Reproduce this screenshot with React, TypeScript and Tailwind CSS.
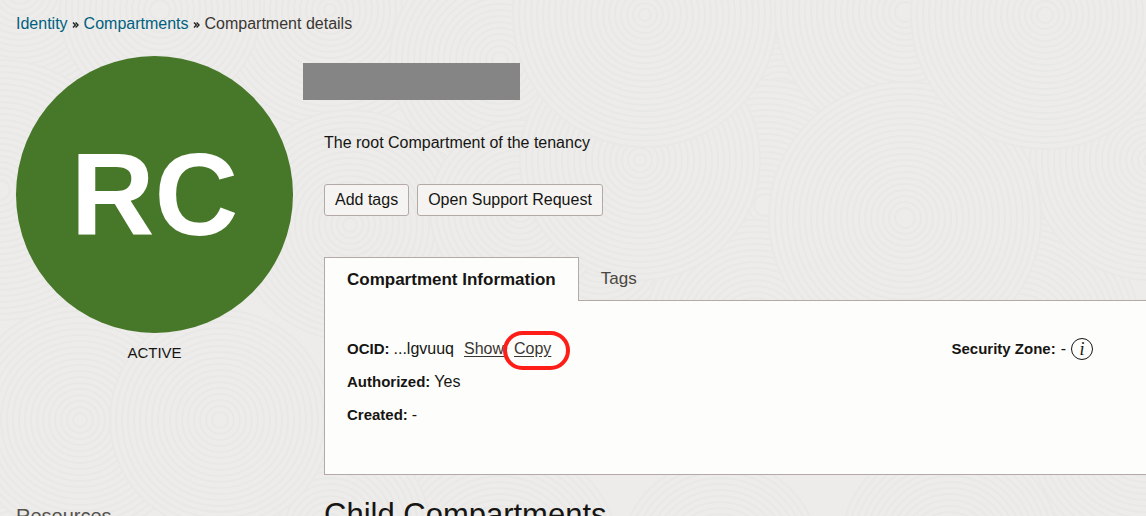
import { Fragment } from "react";

type Swirl = { x: number; y: number; r: number };

// Later swirls overlap the earlier ones.
const swirls: Swirl[] = [
  { x: 600, y: 250, r: 140 }, { x: 20, y: -10, r: 110 }, { x: 330, y: 10, r: 120 },
  { x: 500, y: 60, r: 110 }, { x: 780, y: 100, r: 130 }, { x: 0, y: 190, r: 130 },
  { x: 350, y: 225, r: 115 }, { x: 765, y: 205, r: 125 }, { x: 1146, y: 430, r: 130 },
  { x: 755, y: 330, r: 110 }, { x: 1020, y: 330, r: 120 }, { x: 500, y: 560, r: 120 },
  { x: 20, y: 560, r: 110 }, { x: 330, y: 530, r: 100 }, { x: 80, y: 420, r: 115 },
  { x: 220, y: 420, r: 110 }, { x: 160, y: 10, r: 100 }, { x: 520, y: 210, r: 90 },
  { x: 640, y: 160, r: 120 }, { x: 1150, y: 160, r: 120 }, { x: 645, y: 15, r: 132 },
  { x: 905, y: 12, r: 130 }, { x: 905, y: 218, r: 136 }, { x: 1045, y: 15, r: 134 },
  { x: 720, y: 560, r: 100 }, { x: 950, y: 550, r: 110 },
];

function Texture() {
  return (
    <svg aria-hidden="true" className="absolute inset-0 -z-10 h-full w-full">
      {swirls.map((s) => (
        <Fragment key={`${s.x}-${s.y}`}>
          <circle cx={s.x} cy={s.y} r={s.r} fill="#edecea" />
          {Array.from({ length: Math.floor(s.r / 6) }, (_, i) => (
            <circle key={i} cx={s.x} cy={s.y} r={s.r - i * 6} fill="none" stroke="#e8e8e6" strokeWidth="2" />
          ))}
        </Fragment>
      ))}
    </svg>
  );
}

function Separator() {
  return (
    <svg aria-hidden="true" viewBox="0 0 8 8" className="mx-1 mt-px h-2 w-2" fill="none" stroke="#222" strokeWidth="1.4">
      <path d="M1 1.5 3.4 4 1 6.5M3.6 1.5 6 4 3.6 6.5" />
    </svg>
  );
}

const buttonClass =
  "h-8 rounded-[3px] border border-[#b3aaa5] bg-[#f5f4f2] px-[10px] text-base text-[#161513]";

export default function App() {
  return (
    <div className="relative isolate min-h-screen overflow-hidden bg-[#edecea] pt-3 pl-4 font-['Liberation_Sans',Arial,sans-serif] text-base text-[#161513]">
      <Texture />
      <nav aria-label="Breadcrumb" className="flex h-6 items-center">
        <a href="#identity" className="text-[#00607f]">Identity</a>
        <Separator />
        <a href="#compartments" className="text-[#00607f]">Compartments</a>
        <Separator />
        <span className="text-[#3a3632]">Compartment details</span>
      </nav>

      <div className="mt-5 flex gap-[31px]">
        <aside className="w-[277px] shrink-0">
          <div className="flex aspect-square items-center justify-center rounded-full bg-[#477728] text-[116px] font-bold text-white">
            RC
          </div>
          <p className="mt-2 text-center text-[15px] leading-6">ACTIVE</p>
          <h2 className="mt-[135px] text-xl leading-8 text-[#55514d]">Resources</h2>
        </aside>

        <main className="min-w-0 flex-1">
          <div className="mt-[7px] -ml-[21px] h-[37px] w-[217px] bg-[#858585]" />
          <p className="mt-[31px] leading-6">The root Compartment of the tenancy</p>
          <div className="mt-[29px] flex gap-2">
            <button type="button" className={buttonClass}>Add tags</button>
            <button type="button" className={buttonClass}>Open Support Request</button>
          </div>

          <div role="tablist" className="mt-[41px] flex">
            <button
              type="button"
              role="tab"
              aria-selected="true"
              className="z-10 -mb-px h-11 border border-b-0 border-[#b3aaa5] bg-[#fdfdfb] px-[22px] text-[17px] font-bold"
            >
              Compartment Information
            </button>
            <button type="button" role="tab" aria-selected="false" className="px-[22px] text-[17px] text-[#4a4642]">
              Tags
            </button>
          </div>
          <section className="flex justify-between border border-r-0 border-[#b3aaa5] bg-[#fdfdfb] pt-[31px] pr-[53px] pb-[43px] pl-[22px] leading-[33px]">
            <dl>
              <div className="flex">
                <dt className="text-[15px] leading-[33px] font-bold">OCID:</dt>
                <dd className="flex pl-1">
                  ...lgvuuq
                  <button type="button" className="ml-[10px] text-[#3a3632] underline underline-offset-2">Show</button>
                  <span className="relative ml-[10px]">
                    <button type="button" className="text-[#3a3632] underline underline-offset-2">Copy</button>
                    <span className="pointer-events-none absolute -top-px -right-[19px] -left-[11px] h-[39px] rounded-[20px] border-4 border-[#ff1d17]" />
                  </span>
                </dd>
              </div>
              <div className="flex">
                <dt className="text-[15px] leading-[33px] font-bold">Authorized:</dt>
                <dd className="pl-1">Yes</dd>
              </div>
              <div className="flex">
                <dt className="text-[15px] leading-[33px] font-bold">Created:</dt>
                <dd className="pl-1">-</dd>
              </div>
            </dl>
            <dl>
              <div className="flex">
                <dt className="text-[15px] leading-[33px] font-bold">Security Zone:</dt>
                <dd className="flex items-center gap-[5px] pl-[5px]">
                  -
                  <button
                    type="button"
                    aria-label="About security zones"
                    className="flex size-[22px] items-center justify-center rounded-full border border-[#161513] font-['Liberation_Serif',serif] text-lg leading-5 italic"
                  >
                    i
                  </button>
                </dd>
              </div>
            </dl>
          </section>
          <h2 className="mt-5 text-[31px] leading-10">Child Compartments</h2>
        </main>
      </div>
    </div>
  );
}
